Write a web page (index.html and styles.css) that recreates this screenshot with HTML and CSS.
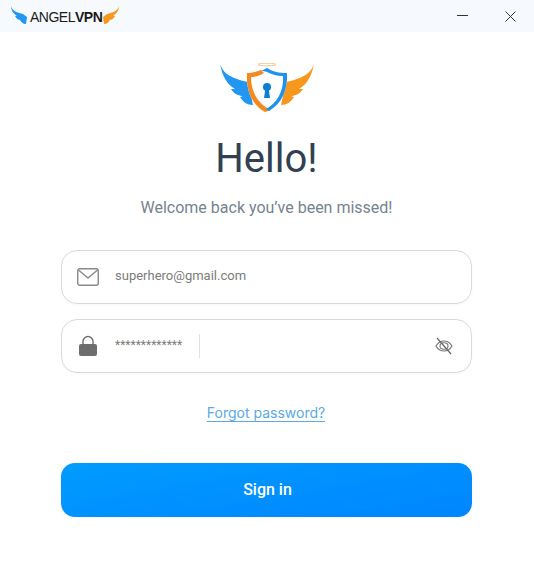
FILE: index.html
```html
<!doctype html>
<html>

<head>
    <meta charset="UTF-8">
    <meta name="viewport" content="width=device-width, initial-scale=1.0">

    <link rel="stylesheet" href="styles.css">
    <title>AngelVPN</title>
</head>

<body>
    <div class="titlebar">
        <div class="brand">
            <svg class="brand-wing" width="16" height="18" viewBox="0 0 16 18">
                <path d="M0 0C1 4 4 6 12 8L16 11L15 18C12 18 10 16 9 14L10 14C7 14 6 13 4 10L6 10C3 8 0 5 0 0Z" fill="#2196f3" />
            </svg>
            <span class="brand-name">ANGEL<b>VPN</b></span>
            <svg class="brand-wing" width="16" height="18" viewBox="0 0 16 18">
                <path d="M16 0C15 4 12 6 4 8L0 11L1 18C4 18 6 16 7 14L6 14C9 14 10 13 12 10L10 10C13 8 16 5 16 0Z" fill="#f7981d" />
            </svg>
        </div>
        <div class="window-buttons">
            <svg width="11" height="11" viewBox="0 0 11 11">
                <path d="M0 4.5H11" stroke="#333" stroke-width="1" />
            </svg>
            <svg width="11" height="11" viewBox="0 0 11 11">
                <path d="M.5 .5L10.5 10.5M10.5 .5L.5 10.5" stroke="#333" stroke-width="1" />
            </svg>
        </div>
    </div>

    <div class="content">
        <svg class="logo" width="96" height="50" viewBox="0 0 96 50">
            <ellipse cx="48" cy="1.5" rx="9" ry="1.3" fill="none" stroke="#f3c48b" stroke-width="1" />
            <path d="M1 0C3 9 10 15 29 19L34 42C28 42 24 39 21 34L24 33C20 33 15 31 12 26L16 26C9 22 3 14 1 0Z" fill="#2196f3" />
            <path d="M95 0C93 9 86 15 67 19L62 42C68 42 72 39 75 34L72 33C76 33 81 31 84 26L80 26C87 22 93 14 95 0Z" fill="#f7981d" />
            <path d="M48 5C41 9 35 10 28 10C27 28 33 42 46 49C62 43 69 28 68 10C60 10 54 9 48 5Z" fill="#fff" />
            <path d="M42 7C37 9 33 10 28 10C27 28 33 42 46 49L52 47C39 41 32 29 32 14C37 14 42 12 45 10Z" fill="#f5891f" />
            <path d="M48 5C54 9 60 10 68 10C69 28 62 41 50 48L47 46C58 40 65 28 64 13C57 13 52 11 48 9C46 8 44 8 42 8Z" fill="#1e93ee" />
            <circle cx="48" cy="24" r="4" fill="#0d7fd3" />
            <path d="M46.5 25H49.5L51 35H45Z" fill="#0d7fd3" />
        </svg>

        <h1 class="title">Hello!</h1>
        <p class="subtitle">Welcome back you’ve been missed!</p>

        <div class="field">
            <svg class="field-icon" width="22" height="18" viewBox="0 0 22 18">
                <rect x="0.75" y="0.75" width="20.5" height="16.5" rx="2" fill="none" stroke="#8a8a8a" stroke-width="1.4" />
                <path d="M1.5 2L11 10L20.5 2" fill="none" stroke="#8a8a8a" stroke-width="1.4" />
            </svg>
            <span class="field-text email">superhero@gmail.com</span>
        </div>

        <div class="field">
            <svg class="field-icon" width="22" height="22" viewBox="0 0 22 22">
                <path d="M6 10V6.500A5 5 0 0 1 16 6.500V10" fill="none" stroke="#6e6e6e" stroke-width="1.4" />
                <rect x="2" y="9" width="18" height="12" rx="2" fill="#6e6e6e" />
            </svg>
            <span class="field-text password">*************</span>
            <span class="divider"></span>
            <svg class="eye" width="20" height="20" viewBox="0 0 20 20">
                <path d="M2 10C4 6.500 7 5 10 5C13 5 16 6.500 18 10C16 13.500 13 15 10 15C7 15 4 13.500 2 10Z" fill="none" stroke="#777" stroke-width="1.2" />
                <path d="M6 10C6 8 8 6.800 10 6.800C12 6.800 14 8 14 10C14 12 12 13.200 10 13.200C8 13.200 6 12 6 10Z" fill="none" stroke="#777" stroke-width="1.1" />
                <path d="M3 2L17 18" stroke="#666" stroke-width="1.2" />
            </svg>
        </div>

        <a class="forgot" href="#">Forgot password?</a>
        <button class="signin">Sign in</button>
    </div>
</body>

</html>
```
FILE: styles.css
```css
body {
    margin: 0;
    background: #fff;
    font-family: Roboto, sans-serif;
}

.titlebar {
    height: 32px;
    background: #f6fafe;
    display: flex;
    align-items: center;
    justify-content: space-between;
    padding: 0 18px 0 11px;
    box-sizing: border-box;
}

.brand {
    display: flex;
    align-items: center;
    margin-top: -3px;
}

.brand-name {
    font-family: "Liberation Sans", sans-serif;
    font-size: 14px;
    letter-spacing: -0.5px;
    color: #1a1a1a;
    margin: 4px 1px 0 3px;
}

.brand-name b {
    font-weight: 700;
}

.window-buttons {
    display: flex;
    gap: 37px;
    align-items: center;
}

.content {
    display: flex;
    flex-direction: column;
    align-items: center;
    padding: 31px 62px 0 61px;
}

.logo {
    display: block;
}

.title {
    font-size: 40px;
    font-weight: 400;
    line-height: 50px;
    color: #324152;
    margin: 21px 0 0;
}

.subtitle {
    font-size: 16px;
    line-height: 20px;
    color: #75838f;
    margin: 14px 0 32px;
}

.field {
    width: 100%;
    height: 54px;
    box-sizing: border-box;
    border: 1px solid #d9d9d9;
    border-radius: 16px;
    display: flex;
    align-items: center;
    padding: 0 16px 0 15px;
    margin-bottom: 15px;
    box-shadow: 0 1px 3px rgba(0, 0, 0, 0.03);
}

.field-icon {
    flex: none;
}

.field-text {
    font-size: 13px;
    color: #7c7c7c;
    margin-left: 16px;
}

.email {
    margin-top: -3px;
}

.password {
    font-size: 12px;
    margin-top: -3px;
}

.divider {
    width: 1px;
    height: 24px;
    background: #e0e0e0;
    margin-left: 17px;
}

.eye {
    margin-left: auto;
    margin-right: 1px;
}

.forgot {
    font-family: Inter, sans-serif;
    font-size: 14px;
    line-height: 17px;
    color: #5aa9e6;
    text-decoration: none;
    border-bottom: 1px solid #5aa9e6;
    margin: 16px 1px 0 0;
}

.signin {
    width: 100%;
    height: 54px;
    border: none;
    border-radius: 14px;
    margin-top: 41px;
    padding: 0 0 2px 2px;
    color: #fff;
    font-family: Roboto, sans-serif;
    font-size: 16px;
    font-weight: 500;
    background: linear-gradient(170deg, #009cff, #0085ff);
}
```
